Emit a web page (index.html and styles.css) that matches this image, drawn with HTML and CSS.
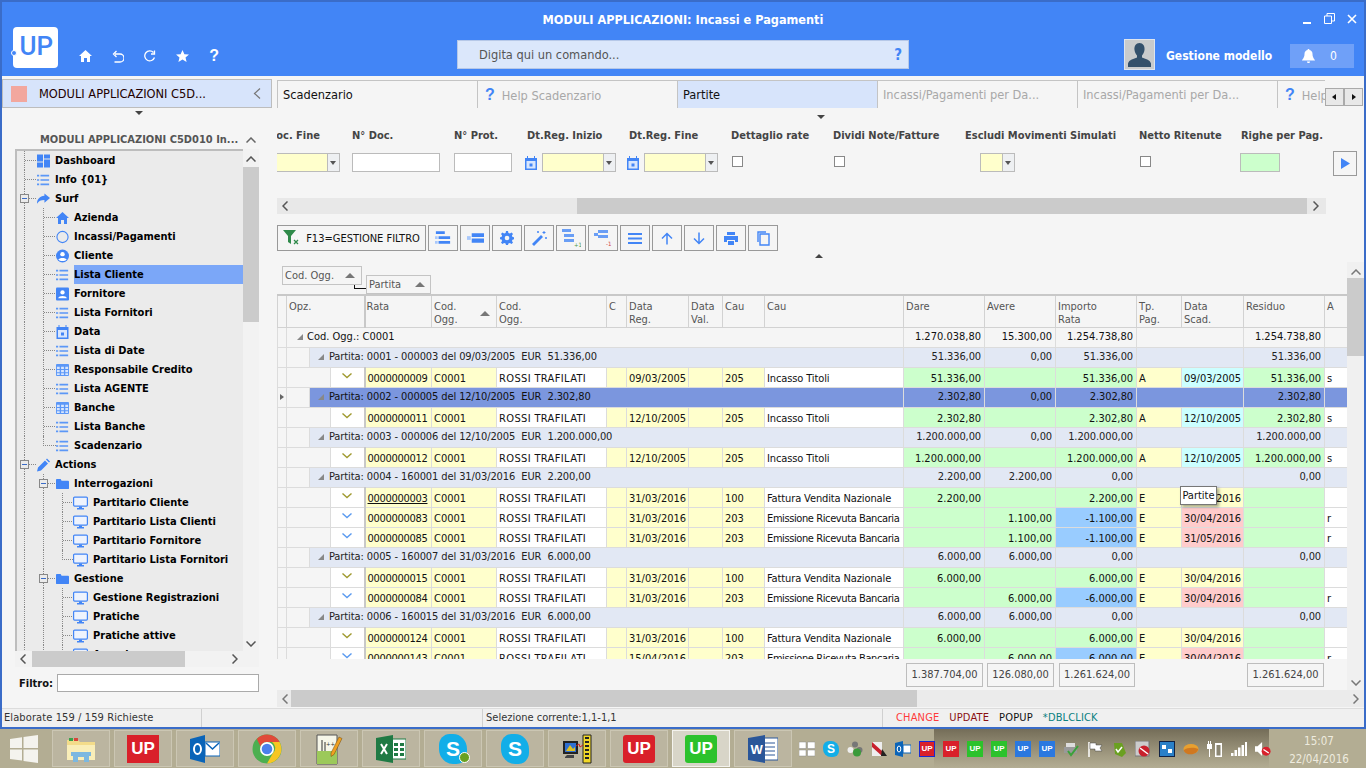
FILE: index.html
```html
<!DOCTYPE html>
<html lang="en">

<head>
    <meta charset="UTF-8" />
    <title>MODULI APPLICAZIONI: Incassi e Pagamenti</title>
    <link rel="stylesheet" href="styles.css">
</head>

<body>
    <svg class="defs" width="0" height="0">
        <symbol id="i-list" viewBox="0 -1 15 14"><path d="M0 0h2.500v2H0zM4 0h10v2H4zM0 5h2.500v2H0zM4 5h10v2H4zM0 10h2.500v2H0zM4 10h10v2H4z" fill="#5b97f7"/></symbol>
        <symbol id="i-dash" viewBox="0 0 13 13"><path d="M0 0h6v7H0zM7 0h6v4H7zM0 8h6v5H0zM7 5h6v8H7z" fill="#4285f6"/></symbol>
        <symbol id="i-share" viewBox="0 0 14 12"><path d="M8 0l6 5-6 5V7C4 7 2 8 0 11c0-5 3-8 8-8.500z" fill="#4285f6"/></symbol>
        <symbol id="i-home" viewBox="0 0 13 12"><path d="M6.500 0L13 6h-2v6H8V8H5v4H2V6H0z" fill="#4285f6"/></symbol>
        <symbol id="i-circle" viewBox="0 0 14 14"><circle cx="7" cy="7" r="6" fill="none" stroke="#4285f6" stroke-width="1.200"/></symbol>
        <symbol id="i-user" viewBox="0 0 14 14"><circle cx="7" cy="7" r="7" fill="#4285f6"/><circle cx="7" cy="5" r="2.400" fill="#fff"/><path d="M2.500 11c1-2.500 8-2.500 9 0-2 2-7 2-9 0z" fill="#fff"/></symbol>
        <symbol id="i-contact" viewBox="0 0 12 12"><rect width="12" height="12" rx="1" fill="#4285f6"/><circle cx="6" cy="4.500" r="2" fill="#fff"/><path d="M2 10c.5-3 7.500-3 8 0z" fill="#fff"/></symbol>
        <symbol id="i-cal" viewBox="0 0 12 14"><path d="M0 2h2V0h1v2h6V0h1v2h2v12H0z" fill="#4285f6"/><path d="M1.500 5h9v7.500h-9z" fill="#d8e6fd"/><path d="M4.500 7.500h3v3h-3z" fill="#4285f6"/></symbol>
        <symbol id="i-grid" viewBox="0 0 14 13"><rect width="14" height="13" rx="1" fill="#5b97f7"/><path d="M1 3h3v2.500H1zM5.500 3h3v2.500h-3zM10 3h3v2.500h-3zM1 6.500h3V9H1zM5.500 6.500h3V9h-3zM10 6.500h3V9h-3zM1 10h3v2H1zM5.500 10h3v2h-3zM10 10h3v2h-3z" fill="#d8e6fd"/></symbol>
        <symbol id="i-pencil" viewBox="0 0 13 13"><path d="M0 13l1-4 7-7 3 3-7 7zM9 1l1-1 3 3-1 1z" fill="#4285f6"/></symbol>
        <symbol id="i-folder" viewBox="0 0 14 11"><path d="M0 1a1 1 0 0 1 1-1h4l1 2h7a1 1 0 0 1 1 1v7a1 1 0 0 1-1 1H1a1 1 0 0 1-1-1z" fill="#4285f6"/></symbol>
        <symbol id="i-screen" viewBox="0 0 15 13"><rect x=".6" y=".6" width="13.800" height="9" rx="1" fill="#eef3fd" stroke="#4285f6" stroke-width="1.200"/><path d="M6 10h3v1.500h2V13H4v-1.500h2z" fill="#4285f6"/></symbol>
        <symbol id="i-chev" viewBox="0 0 10 6"><path d="M.5 .5L5 4.500 9.500 .5" fill="none" stroke="currentColor" stroke-width="1.400"/></symbol>
        <symbol id="i-stack" viewBox="0 0 18 15"><path d="M1 0h10v3H1zM4 5.500h13v3H4zM4 11h13v3H4z" fill="#4285f6"/><path d="M0 5.500h3v3H0zM0 11h3v3H0z" fill="#a9c8fb"/></symbol>
        <symbol id="i-bars" viewBox="0 0 18 10"><path d="M0 3h4v4H0z" fill="#a9c8fb"/><path d="M5 0h13v4H5zM5 5.500h13V10H5z" fill="#4285f6"/></symbol>
    </svg>

    <div class="window">
        <header class="header">
            <div class="title-row">
                <span class="title">MODULI APPLICAZIONI: Incassi e Pagamenti</span>
                <div class="win-btns">
                    <svg width="10" height="10" viewBox="0 0 10 10"><path d="M1 8h8v2H1z" fill="#fff"/></svg>
                    <svg width="11" height="11" viewBox="0 0 11 11"><path d="M.5 3h7v7.500h-7zM3 3V.5h7.500V8H8" fill="none" stroke="#fff"/></svg>
                    <svg width="10" height="10" viewBox="0 0 10 10"><path d="M1 1l8 8M9 1L1 9" stroke="#fff" stroke-width="1.600"/></svg>
                </div>
            </div>
            <div class="tool-row">
                <div class="logo"><span class="logo-dot"></span>UP</div>
                <div class="nav-icons">
                    <svg width="13" height="12" viewBox="0 0 13 12"><path d="M6.500 0L13 6h-2v6H8V8H5v4H2V6H0z" fill="#fff"/></svg>
                    <svg width="12" height="13" viewBox="0 0 12 13"><path d="M3 4h5a3.500 3.500 0 0 1 0 8H2.500M4.500 1L1.500 4l3 3" fill="none" stroke="#fff" stroke-width="1.300"/></svg>
                    <svg width="12" height="12" viewBox="0 0 12 12"><path d="M10.500 7.500A5 5 0 1 1 9.500 2.500M10.500 .5v3.500H7" fill="none" stroke="#fff" stroke-width="1.300"/></svg>
                    <svg width="13" height="12" viewBox="0 0 13 12"><path d="M6.500 0l1.900 4.200 4.600.4-3.500 3 1.100 4.400-4.100-2.400L2.400 12l1.100-4.400L0 4.600l4.600-.4z" fill="#fff"/></svg>
                    <span class="nav-help">?</span>
                </div>
                <div class="search">
                    <span>Digita qui un comando...</span>
                    <span class="search-help">?</span>
                </div>
                <div class="avatar">
                    <svg width="29" height="29" viewBox="0 0 29 29"><rect width="29" height="29" fill="#c9cbcc"/><path d="M14.500 3c3.500 0 5.500 3 5 7-.3 2.500-1.500 4.500-2.500 5.500v2c3 1.500 8 2 9 6V27H3v-3.500c1-4 6-4.500 9-6v-2C11 14.500 9.800 12.500 9.500 10c-.5-4 1.500-7 5-7z" fill="#33506b"/></svg>
                </div>
                <span class="user-name">Gestione modello</span>
                <div class="bell">
                    <svg width="13" height="14" viewBox="0 0 13 14"><path d="M6.500 0c.7 0 1 .5 1 1 2 .5 3 2 3 4 0 4 2.500 5.500 2.500 6.500H0C0 10.500 2.500 9 2.500 5c0-2 1-3.500 3-4 0-.5.300-1 1-1zM5 12.500h3c0 1-.7 1.500-1.500 1.500S5 13.500 5 12.500z" fill="#fff"/></svg>
                    <span>0</span>
                </div>
            </div>
        </header>

        <div class="main">
            <aside class="side">
                <div class="side-head">
                    <span class="side-square"></span>
                    <span class="side-name">MODULI APPLICAZIONI C5D...</span>
                    <svg width="8" height="11" viewBox="0 0 8 11"><path d="M7 .5L1.500 5.500 7 10.500" fill="none" stroke="#777" stroke-width="1.200"/></svg>
                </div>
                <div class="tri tri-side"></div>
                <div class="side-title">
                    <span>MODULI APPLICAZIONI C5D010 In...</span>
                    <svg width="10" height="6" viewBox="0 0 10 6"><path d="M.5 5.500L5 1l4.500 4.500" fill="none" stroke="#666" stroke-width="1.500"/></svg>
                </div>
                <div class="tree-wrap">
                    <div class="tree">
                        <div class="node"><i class="tee"></i><svg class="ico"><use href="#i-dash"/></svg><span>Dashboard</span></div>
                        <div class="node"><i class="tee"></i><svg class="ico"><use href="#i-list"/></svg><span>Info {01}</span></div>
                        <div class="node"><i class="tee"><b class="exp"></b></i><svg class="ico"><use href="#i-share"/></svg><span>Surf</span></div>
                        <div class="node lv1"><i class="pass"></i><i class="tee"></i><svg class="ico"><use href="#i-home"/></svg><span>Azienda</span></div>
                        <div class="node lv1"><i class="pass"></i><i class="tee"></i><svg class="ico"><use href="#i-circle"/></svg><span>Incassi/Pagamenti</span></div>
                        <div class="node lv1"><i class="pass"></i><i class="tee"></i><svg class="ico"><use href="#i-user"/></svg><span>Cliente</span></div>
                        <div class="node lv1"><i class="pass"></i><i class="tee"></i><svg class="ico"><use href="#i-list"/></svg><span class="picked">Lista Cliente</span></div>
                        <div class="node lv1"><i class="pass"></i><i class="tee"></i><svg class="ico"><use href="#i-contact"/></svg><span>Fornitore</span></div>
                        <div class="node lv1"><i class="pass"></i><i class="tee"></i><svg class="ico"><use href="#i-list"/></svg><span>Lista Fornitori</span></div>
                        <div class="node lv1"><i class="pass"></i><i class="tee"></i><svg class="ico"><use href="#i-cal"/></svg><span>Data</span></div>
                        <div class="node lv1"><i class="pass"></i><i class="tee"></i><svg class="ico"><use href="#i-list"/></svg><span>Lista di Date</span></div>
                        <div class="node lv1"><i class="pass"></i><i class="tee"></i><svg class="ico"><use href="#i-grid"/></svg><span>Responsabile Credito</span></div>
                        <div class="node lv1"><i class="pass"></i><i class="tee"></i><svg class="ico"><use href="#i-list"/></svg><span>Lista AGENTE</span></div>
                        <div class="node lv1"><i class="pass"></i><i class="tee"></i><svg class="ico"><use href="#i-grid"/></svg><span>Banche</span></div>
                        <div class="node lv1"><i class="pass"></i><i class="tee"></i><svg class="ico"><use href="#i-list"/></svg><span>Lista Banche</span></div>
                        <div class="node lv1"><i class="pass"></i><i class="elbow"></i><svg class="ico"><use href="#i-list"/></svg><span>Scadenzario</span></div>
                        <div class="node"><i class="tee"><b class="exp"></b></i><svg class="ico"><use href="#i-pencil"/></svg><span>Actions</span></div>
                        <div class="node lv1"><i class="pass"></i><i class="tee"><b class="exp"></b></i><svg class="ico"><use href="#i-folder"/></svg><span>Interrogazioni</span></div>
                        <div class="node lv2"><i class="pass"></i><i class="pass"></i><i class="tee"></i><svg class="ico"><use href="#i-screen"/></svg><span>Partitario Cliente</span></div>
                        <div class="node lv2"><i class="pass"></i><i class="pass"></i><i class="tee"></i><svg class="ico"><use href="#i-screen"/></svg><span>Partitario Lista Clienti</span></div>
                        <div class="node lv2"><i class="pass"></i><i class="pass"></i><i class="tee"></i><svg class="ico"><use href="#i-screen"/></svg><span>Partitario Fornitore</span></div>
                        <div class="node lv2"><i class="pass"></i><i class="pass"></i><i class="elbow"></i><svg class="ico"><use href="#i-screen"/></svg><span>Partitario Lista Fornitori</span></div>
                        <div class="node lv1"><i class="pass"></i><i class="tee"><b class="exp"></b></i><svg class="ico"><use href="#i-folder"/></svg><span>Gestione</span></div>
                        <div class="node lv2"><i class="pass"></i><i class="pass"></i><i class="tee"></i><svg class="ico"><use href="#i-screen"/></svg><span>Gestione Registrazioni</span></div>
                        <div class="node lv2"><i class="pass"></i><i class="pass"></i><i class="tee"></i><svg class="ico"><use href="#i-screen"/></svg><span>Pratiche</span></div>
                        <div class="node lv2"><i class="pass"></i><i class="pass"></i><i class="tee"></i><svg class="ico"><use href="#i-screen"/></svg><span>Pratiche attive</span></div>
                        <div class="node lv2"><i class="pass"></i><i class="pass"></i><i class="tee"></i><svg class="ico"><use href="#i-screen"/></svg><span>Agenda</span></div>
                    </div>
                    <div class="vbar tree-vbar">
                        <svg width="10" height="6" viewBox="0 0 10 6"><path d="M.5 5.500L5 1l4.500 4.500" fill="none" stroke="#555" stroke-width="1.500"/></svg>
                        <div class="vbar-thumb"></div>
                        <svg class="vbar-down" width="10" height="6" viewBox="0 0 10 6"><path d="M.5 .5L5 5 9.500 .5" fill="none" stroke="#555" stroke-width="1.500"/></svg>
                    </div>
                </div>
                <div class="hbar tree-hbar">
                    <svg width="6" height="10" viewBox="0 0 6 10"><path d="M5.500 .5L1 5l4.500 4.500" fill="none" stroke="#555" stroke-width="1.500"/></svg>
                    <div class="hbar-thumb"></div>
                    <svg width="6" height="10" viewBox="0 0 6 10"><path d="M.5 .5L5 5 .5 9.500" fill="none" stroke="#555" stroke-width="1.500"/></svg>
                </div>
                <div class="filtro">
                    <label for="filtro-input">Filtro:</label>
                    <input type="text" id="filtro-input" />
                </div>
            </aside>

            <section class="content">
                <nav class="tabs">
                    <div class="tab tab-on">Scadenzario</div>
                    <div class="tab tab-off"><b class="q">?</b>Help Scadenzario</div>
                    <div class="tab tab-sel">Partite</div>
                    <div class="tab tab-off">Incassi/Pagamenti per Da...</div>
                    <div class="tab tab-off">Incassi/Pagamenti per Da...</div>
                    <div class="tab tab-off tab-last"><b class="q">?</b>Help</div>
                    <div class="tab-arrows"><span class="arr-l"></span><span class="arr-r"></span></div>
                </nav>
                <div class="tri tri-top"></div>

                <div class="filters">
                    <div class="fcol f1"><label>Doc. Fine</label><div class="combo c1"><span></span><em></em></div></div>
                    <div class="fcol f2"><label>N° Doc.</label><input class="inp i1" type="text" /></div>
                    <div class="fcol f3"><label>N° Prot.</label><input class="inp i2" type="text" /></div>
                    <div class="fcol f4"><label>Dt.Reg. Inizio</label><div class="cal-field"><svg width="12" height="14"><use href="#i-cal"/></svg><div class="combo c2"><span></span><em></em></div></div></div>
                    <div class="fcol f5"><label>Dt.Reg. Fine</label><div class="cal-field"><svg width="12" height="14"><use href="#i-cal"/></svg><div class="combo c2"><span></span><em></em></div></div></div>
                    <div class="fcol f6"><label>Dettaglio rate</label><span class="chk"></span></div>
                    <div class="fcol f7"><label>Dividi Note/Fatture</label><span class="chk"></span></div>
                    <div class="fcol f8"><label>Escludi Movimenti Simulati</label><div class="combo c3"><span></span><em></em></div></div>
                    <div class="fcol f9"><label>Netto Ritenute</label><span class="chk"></span></div>
                    <div class="fcol f10"><label>Righe per Pag.</label><div class="righe"></div></div>
                    <button class="run"><svg width="9" height="11" viewBox="0 0 9 11"><path d="M0 0l9 5.500L0 11z" fill="#4285f6"/></svg></button>
                </div>

                <div class="hbar filter-hbar">
                    <svg width="6" height="10" viewBox="0 0 6 10"><path d="M5.500 .5L1 5l4.500 4.500" fill="none" stroke="#555" stroke-width="1.500"/></svg>
                    <div class="hbar-thumb"></div>
                    <svg width="6" height="10" viewBox="0 0 6 10"><path d="M.5 .5L5 5 .5 9.500" fill="none" stroke="#555" stroke-width="1.500"/></svg>
                </div>

                <div class="toolbar">
                    <button class="btn btn-filter">
                        <svg width="17" height="16" viewBox="0 0 17 16"><path d="M0 0h13L8 6v8L5 12V6z" fill="#2f8a4a"/><path d="M11 10l4 4M15 10l-4 4" stroke="#2f8a4a" stroke-width="1.300"/></svg>
                        F13=GESTIONE FILTRO
                    </button>
                    <button class="btn"><svg width="16" height="14"><use href="#i-stack"/></svg></button>
                    <button class="btn"><svg width="17" height="10"><use href="#i-bars"/></svg></button>
                    <button class="btn"><svg width="14" height="14" viewBox="0 0 14 14"><path d="M6 0h2l.4 2 1.500.6L11.600 1.500 13 3l-1.100 1.600.6 1.400 1.500.3v2l-1.500.4-.6 1.400L13 11.600 11.600 13l-1.700-1.100-1.500.6L8 14H6l-.4-1.500-1.500-.6L2.400 13 1 11.600l1.100-1.500-.6-1.500L0 8.300v-2l1.500-.3.6-1.400L1 3l1.400-1.500L4.100 2.600 5.600 2z" fill="#4285f6"/><circle cx="7" cy="7" r="2.300" fill="#f5f5f5"/></svg></button>
                    <button class="btn"><svg width="15" height="15" viewBox="0 0 15 15"><path d="M0 13L9 4l2 2-9 9z" fill="#4285f6"/><path d="M12 0v3M10.500 1.500h3M14 6v2M13 7h2M6 0v2M5 1h2" stroke="#4285f6"/></svg></button>
                    <button class="btn"><svg class="ico-sm" width="20" height="18" viewBox="0 0 20 18"><path d="M1 0h9v3H1zM3 5h10v3H3zM3 10h10v3H3z" fill="#6a9ef5"/><text x="13" y="18" class="mini mini-g">+1</text></svg></button>
                    <button class="btn"><svg class="ico-sm" width="20" height="18" viewBox="0 0 20 18"><path d="M1 4h4v3H1zM5 1h10v3H5zM5 6h10v3H5z" fill="#6a9ef5"/><text x="13" y="17" class="mini mini-r">-1</text></svg></button>
                    <button class="btn"><svg width="14" height="11" viewBox="0 0 14 11"><path d="M0 0h14v2H0zM0 4.500h14v2H0zM0 9h14v2H0z" fill="#4285f6"/></svg></button>
                    <button class="btn"><svg width="12" height="13" viewBox="0 0 12 13"><path d="M6 12.500V1.500M1 6.500l5-5 5 5" fill="none" stroke="#4285f6" stroke-width="1.500"/></svg></button>
                    <button class="btn"><svg width="12" height="13" viewBox="0 0 12 13"><path d="M6 .5v11M1 6.500l5 5 5-5" fill="none" stroke="#4285f6" stroke-width="1.500"/></svg></button>
                    <button class="btn"><svg width="14" height="13" viewBox="0 0 14 13"><path d="M3 0h8v3H3zM0 4h14v6h-3V8H3v2H0zM4 9h6v4H4z" fill="#4285f6"/></svg></button>
                    <button class="btn"><svg width="13" height="15" viewBox="0 0 13 15"><path d="M3 3h9v11H3zM1 11V1h8" fill="none" stroke="#4285f6" stroke-width="1.400"/></svg></button>
                </div>

                <div class="grid-area">
                    <div class="grid-col">
                        <div class="band">
                            <div class="tri tri-band"></div>
                            <div class="chips">
                                <div class="chip chip-a">Cod. Ogg.<em></em></div>
                                <span class="chip-link"></span>
                                <div class="chip chip-b">Partita<em></em></div>
                            </div>
                        </div>
                        <div class="grid">
                            <table class="tbl">
                                <colgroup>
                                    <col class="w9"><col class="w23"><col class="w21"><col class="w34"><col class="w67"><col class="w65"><col class="w110"><col class="w20"><col class="w62"><col class="w34"><col class="w42"><col class="w139"><col class="w81"><col class="w71"><col class="w81"><col class="w45"><col class="w62"><col class="w81"><col class="w23">
                                </colgroup>
                                <thead>
                                    <tr>
                                        <th></th><th colspan="3">Opz.</th><th class="thick">Rata</th><th class="sorted">Cod.<br>Ogg.<em></em></th><th>Cod.<br>Ogg.</th><th>C</th><th>Data<br>Reg.</th><th>Data<br>Val.</th><th>Cau</th><th>Cau</th><th>Dare</th><th>Avere</th><th>Importo<br>Rata</th><th>Tp.<br>Pag.</th><th>Data<br>Scad.</th><th>Residuo</th><th>A</th>
                                    </tr>
                                </thead>
                                <tbody>
                                    <tr class="top"><td></td><td colspan="11"><b class="node-tri"></b>Cod. Ogg.: C0001</td><td class="n">1.270.038,80</td><td class="n">15.300,00</td><td class="n">1.254.738,80</td><td colspan="2"></td><td class="n">1.254.738,80</td><td></td></tr>

                                    <tr class="grp"><td class="ind"></td><td class="gut"></td><td colspan="10"><b class="node-tri"></b>Partita: 0001 - 000003 del 09/03/2005&nbsp; EUR&nbsp; 51.336,00</td><td class="n">51.336,00</td><td class="n">0,00</td><td class="n">51.336,00</td><td colspan="2"></td><td class="n">51.336,00</td><td></td></tr>
                                    <tr><td class="ind"></td><td class="gut" colspan="2"></td><td class="opz olive"><svg width="10" height="6"><use href="#i-chev"/></svg></td><td class="y">0000000009</td><td class="y">C0001</td><td>ROSSI TRAFILATI</td><td class="y"></td><td class="y">09/03/2005</td><td class="y"></td><td class="y">205</td><td>Incasso Titoli</td><td class="g n">51.336,00</td><td class="g"></td><td class="g n">51.336,00</td><td class="y">A</td><td class="c">09/03/2005</td><td class="g n">51.336,00</td><td>s</td></tr>

                                    <tr class="grp sel"><td class="ind"><b class="row-arrow"></b></td><td class="gut"></td><td colspan="10"><b class="node-tri"></b>Partita: 0002 - 000005 del 12/10/2005&nbsp; EUR&nbsp; 2.302,80</td><td class="n">2.302,80</td><td class="n">0,00</td><td class="n">2.302,80</td><td colspan="2"></td><td class="n">2.302,80</td><td></td></tr>
                                    <tr><td class="ind"></td><td class="gut" colspan="2"></td><td class="opz olive"><svg width="10" height="6"><use href="#i-chev"/></svg></td><td class="y">0000000011</td><td class="y">C0001</td><td>ROSSI TRAFILATI</td><td class="y"></td><td class="y">12/10/2005</td><td class="y"></td><td class="y">205</td><td>Incasso Titoli</td><td class="g n">2.302,80</td><td class="g"></td><td class="g n">2.302,80</td><td class="y">A</td><td class="c">12/10/2005</td><td class="g n">2.302,80</td><td>s</td></tr>

                                    <tr class="grp"><td class="ind"></td><td class="gut"></td><td colspan="10"><b class="node-tri"></b>Partita: 0003 - 000006 del 12/10/2005&nbsp; EUR&nbsp; 1.200.000,00</td><td class="n">1.200.000,00</td><td class="n">0,00</td><td class="n">1.200.000,00</td><td colspan="2"></td><td class="n">1.200.000,00</td><td></td></tr>
                                    <tr><td class="ind"></td><td class="gut" colspan="2"></td><td class="opz olive"><svg width="10" height="6"><use href="#i-chev"/></svg></td><td class="y">0000000012</td><td class="y">C0001</td><td>ROSSI TRAFILATI</td><td class="y"></td><td class="y">12/10/2005</td><td class="y"></td><td class="y">205</td><td>Incasso Titoli</td><td class="g n">1.200.000,00</td><td class="g"></td><td class="g n">1.200.000,00</td><td class="y">A</td><td class="c">12/10/2005</td><td class="g n">1.200.000,00</td><td>s</td></tr>

                                    <tr class="grp"><td class="ind"></td><td class="gut"></td><td colspan="10"><b class="node-tri"></b>Partita: 0004 - 160001 del 31/03/2016&nbsp; EUR&nbsp; 2.200,00</td><td class="n">2.200,00</td><td class="n">2.200,00</td><td class="n">0,00</td><td colspan="2"></td><td class="n">0,00</td><td></td></tr>
                                    <tr><td class="ind"></td><td class="gut" colspan="2"></td><td class="opz olive"><svg width="10" height="6"><use href="#i-chev"/></svg></td><td class="y"><u>0000000003</u></td><td class="y">C0001</td><td>ROSSI TRAFILATI</td><td class="y"></td><td class="y">31/03/2016</td><td class="y"></td><td class="y">100</td><td>Fattura Vendita Nazionale</td><td class="g n">2.200,00</td><td class="g"></td><td class="g n">2.200,00</td><td class="y">E</td><td class="y">30/04/2016</td><td class="g"></td><td></td></tr>
                                    <tr><td class="ind"></td><td class="gut" colspan="2"></td><td class="opz blu"><svg width="10" height="6"><use href="#i-chev"/></svg></td><td class="y">0000000083</td><td class="y">C0001</td><td>ROSSI TRAFILATI</td><td class="y"></td><td class="y">31/03/2016</td><td class="y"></td><td class="y">203</td><td class="em">Emissione Ricevuta Bancaria</td><td class="g"></td><td class="g n">1.100,00</td><td class="b n">-1.100,00</td><td class="y">E</td><td class="p">30/04/2016</td><td class="g"></td><td>r</td></tr>
                                    <tr><td class="ind"></td><td class="gut" colspan="2"></td><td class="opz blu"><svg width="10" height="6"><use href="#i-chev"/></svg></td><td class="y">0000000085</td><td class="y">C0001</td><td>ROSSI TRAFILATI</td><td class="y"></td><td class="y">31/03/2016</td><td class="y"></td><td class="y">203</td><td class="em">Emissione Ricevuta Bancaria</td><td class="g"></td><td class="g n">1.100,00</td><td class="b n">-1.100,00</td><td class="y">E</td><td class="p">31/05/2016</td><td class="g"></td><td>r</td></tr>

                                    <tr class="grp"><td class="ind"></td><td class="gut"></td><td colspan="10"><b class="node-tri"></b>Partita: 0005 - 160007 del 31/03/2016&nbsp; EUR&nbsp; 6.000,00</td><td class="n">6.000,00</td><td class="n">6.000,00</td><td class="n">0,00</td><td colspan="2"></td><td class="n">0,00</td><td></td></tr>
                                    <tr><td class="ind"></td><td class="gut" colspan="2"></td><td class="opz olive"><svg width="10" height="6"><use href="#i-chev"/></svg></td><td class="y">0000000015</td><td class="y">C0001</td><td>ROSSI TRAFILATI</td><td class="y"></td><td class="y">31/03/2016</td><td class="y"></td><td class="y">100</td><td>Fattura Vendita Nazionale</td><td class="g n">6.000,00</td><td class="g"></td><td class="g n">6.000,00</td><td class="y">E</td><td class="y">30/04/2016</td><td class="g"></td><td></td></tr>
                                    <tr><td class="ind"></td><td class="gut" colspan="2"></td><td class="opz blu"><svg width="10" height="6"><use href="#i-chev"/></svg></td><td class="y">0000000084</td><td class="y">C0001</td><td>ROSSI TRAFILATI</td><td class="y"></td><td class="y">31/03/2016</td><td class="y"></td><td class="y">203</td><td class="em">Emissione Ricevuta Bancaria</td><td class="g"></td><td class="g n">6.000,00</td><td class="b n">-6.000,00</td><td class="y">E</td><td class="p">30/04/2016</td><td class="g"></td><td>r</td></tr>

                                    <tr class="grp"><td class="ind"></td><td class="gut"></td><td colspan="10"><b class="node-tri"></b>Partita: 0006 - 160015 del 31/03/2016&nbsp; EUR&nbsp; 6.000,00</td><td class="n">6.000,00</td><td class="n">6.000,00</td><td class="n">0,00</td><td colspan="2"></td><td class="n">0,00</td><td></td></tr>
                                    <tr><td class="ind"></td><td class="gut" colspan="2"></td><td class="opz olive"><svg width="10" height="6"><use href="#i-chev"/></svg></td><td class="y">0000000124</td><td class="y">C0001</td><td>ROSSI TRAFILATI</td><td class="y"></td><td class="y">31/03/2016</td><td class="y"></td><td class="y">100</td><td>Fattura Vendita Nazionale</td><td class="g n">6.000,00</td><td class="g"></td><td class="g n">6.000,00</td><td class="y">E</td><td class="y">30/04/2016</td><td class="g"></td><td></td></tr>
                                    <tr><td class="ind"></td><td class="gut" colspan="2"></td><td class="opz blu"><svg width="10" height="6"><use href="#i-chev"/></svg></td><td class="y">0000000143</td><td class="y">C0001</td><td>ROSSI TRAFILATI</td><td class="y"></td><td class="y">15/04/2016</td><td class="y"></td><td class="y">203</td><td class="em">Emissione Ricevuta Bancaria</td><td class="g"></td><td class="g n">6.000,00</td><td class="b n">-6.000,00</td><td class="y">E</td><td class="p">30/04/2016</td><td class="g"></td><td>r</td></tr>
                                </tbody>
                            </table>
                            <div class="tooltip">Partite</div>
                        </div>
                        <div class="totals">
                            <span class="tot t1">1.387.704,00</span>
                            <span class="tot t2">126.080,00</span>
                            <span class="tot t3">1.261.624,00</span>
                            <span class="tot t4">1.261.624,00</span>
                        </div>
                    </div>
                    <div class="vbar grid-vbar">
                        <svg width="10" height="6" viewBox="0 0 10 6"><path d="M.5 5.500L5 1l4.500 4.500" fill="none" stroke="#777" stroke-width="1.500"/></svg>
                        <div class="vbar-thumb"></div>
                        <svg class="vbar-down" width="10" height="6" viewBox="0 0 10 6"><path d="M.5 .5L5 5 9.500 .5" fill="none" stroke="#777" stroke-width="1.500"/></svg>
                    </div>
                </div>

                <div class="hbar grid-hbar">
                    <svg width="6" height="10" viewBox="0 0 6 10"><path d="M5.500 .5L1 5l4.500 4.500" fill="none" stroke="#777" stroke-width="1.500"/></svg>
                    <div class="hbar-thumb"></div>
                    <svg width="6" height="10" viewBox="0 0 6 10"><path d="M.5 .5L5 5 .5 9.500" fill="none" stroke="#777" stroke-width="1.500"/></svg>
                </div>
            </section>
        </div>

        <footer class="status">
            <div class="st st1">Elaborate 159 / 159 Richieste</div>
            <div class="st st2"></div>
            <div class="st st3">Selezione corrente:1,1-1,1</div>
            <div class="st st4">
                <span class="k-change">CHANGE</span>
                <span class="k-update">UPDATE</span>
                <span class="k-popup">POPUP</span>
                <span class="k-dbl">*DBLCLICK</span>
            </div>
        </footer>
    </div>

    <div class="taskbar">
        <svg class="start" width="28" height="28" viewBox="0 0 28 28"><path d="M0 4l12-1.700V13H0zM13.500 2L28 0v13H13.500zM0 14.500h12v11L0 24zM13.500 14.500H28V28l-14.500-2z" fill="#f4f3ee"/></svg>
        <div class="task-apps">
            <div class="app"><svg width="30" height="30" viewBox="0 0 30 30"><path d="M1 6h11l2 2h15v18H1z" fill="#f3dc8a"/><path d="M1 11h28v15H1z" fill="#f9eeb8"/><path d="M3 4h4v3H3z" fill="#3aa24a"/><path d="M8 4h4v3H8z" fill="#d8453a"/><path d="M5 18h20v4h-2v6h-5v-5h-6v5H7v-6H5z" fill="#7cb8e0"/></svg></div>
            <div class="app"><span class="up up-red">UP</span></div>
            <div class="app"><svg width="30" height="30" viewBox="0 0 30 30"><path d="M0 5L15 1v28L0 25z" fill="#0a64b8"/><path d="M15 8h15v14H15z" fill="#fff"/><path d="M16 9l6.500 6L29 9" fill="none" stroke="#0a64b8" stroke-width="1.500"/><rect x="15" y="8" width="15" height="14" fill="none" stroke="#0a64b8"/><ellipse cx="7.500" cy="15" rx="3.500" ry="5" fill="none" stroke="#fff" stroke-width="2"/></svg></div>
            <div class="app"><svg width="30" height="30" viewBox="0 0 30 30"><circle cx="15" cy="15" r="14.500" fill="#4caf50"/><path d="M15 .5A14.500 14.500 0 0 1 27.600 8H15a7 7 0 0 0-6.500 4.500L4.800 5A14.500 14.500 0 0 1 15 .5z" fill="#e04a3a"/><path d="M27.600 8A14.500 14.500 0 0 1 15 29.500L21 19a7 7 0 0 0-1-11z" fill="#f7c623"/><circle cx="15" cy="15" r="7" fill="#fff"/><circle cx="15" cy="15" r="5.300" fill="#4a80ec"/></svg></div>
            <div class="app"><svg width="30" height="32" viewBox="0 0 30 32"><path d="M3 2h20v29H3z" fill="#f6f6e8" stroke="#555"/><path d="M3 18h20v13H3z" fill="#9cc95a"/><path d="M8 7v11M11 9v9" stroke="#333"/><text x="12" y="13" class="mini">++</text><path d="M17 20l8-16 3 1.500-8 16-3 2z" fill="#f0a020" stroke="#6b4a10" stroke-width=".5"/></svg></div>
            <div class="app"><svg width="30" height="30" viewBox="0 0 30 30"><path d="M15 5h15v20H15z" fill="#fff" stroke="#1f7a44"/><path d="M18 9h4v3h-4zM24 9h4v3h-4zM18 14h4v3h-4zM24 14h4v3h-4zM18 19h4v3h-4zM24 19h4v3h-4z" fill="#1f7a44"/><path d="M0 4L17 1v28L0 26z" fill="#1f7a44"/><path d="M5 10l6 10M11 10L5 20" stroke="#fff" stroke-width="2"/></svg></div>
            <div class="app"><span class="skype">S</span><b class="skype-ok"></b></div>
            <div class="app"><span class="skype">S</span></div>
            <div class="app"><svg width="30" height="30" viewBox="0 0 30 30"><path d="M1 7h15v13H1z" fill="#222"/><path d="M3 9h11v9H3z" fill="#2f6fd0"/><path d="M4 17l4-6 3 4 2-2v4z" fill="#e0c020"/><path d="M5 21h7v3H3v-1z" fill="#444"/><path d="M21 1h8v28h-8z" fill="#f2d828" stroke="#222"/><path d="M23 4h4M23 8h4M23 12h4M23 16h4M23 20h4M23 24h4" stroke="#222" stroke-width="2"/><path d="M14 12l3-2 1 3 3-2" fill="none" stroke="#d02020"/></svg></div>
            <div class="app"><span class="up up-red round">UP</span></div>
            <div class="app app-on"><span class="up up-green round">UP</span></div>
            <div class="app"><svg width="30" height="30" viewBox="0 0 30 30"><path d="M14 4h16v22H14z" fill="#fff" stroke="#2a5699"/><path d="M17 9h10M17 13h10M17 17h10M17 21h10" stroke="#2a5699"/><path d="M0 4L17 1v28L0 26z" fill="#2a5699"/><text x="2.500" y="20" class="word-w">W</text></svg></div>
        </div>
        <div class="tray">
            <svg width="16" height="16" viewBox="0 0 16 16"><path d="M0 1h7v6.500H0zM8.500 1H16v6.500H8.500zM0 9h7v6H0zM8.500 9H16v6H8.500z" fill="#fff" stroke="#888" stroke-width=".5"/></svg>
            <span class="skype tiny">S</span>
            <svg width="16" height="16" viewBox="0 0 16 16"><circle cx="8" cy="3.500" r="3" fill="#777"/><circle cx="3.500" cy="9" r="3" fill="#eee"/><circle cx="12.500" cy="9" r="3" fill="#777"/><circle cx="10" cy="11.500" r="4" fill="#3a9a3a"/></svg>
            <svg width="16" height="16" viewBox="0 0 16 16"><path d="M1 1h10v14H1z" fill="#eee"/><path d="M1 1l10 9v5L1 6z" fill="#c8202c"/><path d="M11 8l5 7h-6z" fill="#222"/></svg>
            <svg width="16" height="16" viewBox="0 0 16 16"><path d="M0 2l8-2v16l-8-2z" fill="#0a64b8"/><path d="M8 4h8v8H8z" fill="#fff" stroke="#0a64b8"/><ellipse cx="4" cy="8" rx="1.800" ry="3" fill="none" stroke="#fff"/></svg>
            <span class="up up-red tiny-up edge">UP</span>
            <span class="up up-red tiny-up">UP</span>
            <span class="up up-green tiny-up">UP</span>
            <span class="up up-green tiny-up">UP</span>
            <span class="up up-blue tiny-up">UP</span>
            <span class="up up-blue tiny-up">UP</span>
            <svg width="16" height="16" viewBox="0 0 16 16"><path d="M1 6h13v6H1z" fill="#999"/><path d="M3 2h9v4H3z" fill="#ddd"/><path d="M5 10l3 4 7-9" fill="none" stroke="#3aa23a" stroke-width="2"/></svg>
            <svg width="16" height="16" viewBox="0 0 16 16"><path d="M2 1v15" stroke="#fff" stroke-width="1.500"/><path d="M3 2h6v2h6l-2 3 2 3H8V8H3z" fill="#fff" stroke="#444" stroke-width=".5"/></svg>
            <svg width="16" height="16" viewBox="0 0 16 16"><path d="M3 2l8 0 4 10-4 4-7-3z" fill="#6aa020"/><path d="M5 8l2 3 4-5" fill="none" stroke="#fff" stroke-width="1.500"/></svg>
            <svg width="16" height="16" viewBox="0 0 16 16"><rect x="0" y="0" width="14" height="15" fill="#ccc" stroke="#777"/><circle cx="9" cy="10" r="5.500" fill="#c8202c"/><path d="M5 7l8 6" stroke="#fff" stroke-width="1.500"/></svg>
            <svg width="16" height="16" viewBox="0 0 16 16"><rect x=".5" y=".5" width="15" height="15" fill="#2a80c8" stroke="#124"/><path d="M3 4h4v4H3zM9 8h4v4H9z" fill="#fff"/></svg>
            <svg width="16" height="12" viewBox="0 0 18 12"><ellipse cx="9" cy="6" rx="8.500" ry="5.500" fill="#e8a030"/><path d="M1 7c4-3 12-3 16-1 0 3-4 6-8 6S1 10 1 7z" fill="#d07820"/></svg>
            <svg width="16" height="16" viewBox="0 0 16 16"><path d="M1 0h1v3h1V0h1v3h1v5H3v8H2V8H0V3h1zM8 2h7v14H8z" fill="#fff"/><path d="M9.500 4h4v10.500h-4z" fill="#8b8672"/></svg>
            <svg width="16" height="14" viewBox="0 0 16 14"><path d="M0 11h2.500v3H0zM3.500 8H6v6H3.500zM7 5.500h2.500V14H7zM10.500 3H13v11h-2.500zM14 0h2v14h-2z" fill="#fff"/></svg>
            <svg width="16" height="16" viewBox="0 0 18 16"><path d="M0 5h3l5-5v16l-5-5H0z" fill="#fff"/><circle cx="12.500" cy="10.500" r="5" fill="#d8202c"/><path d="M9.500 8.500l6 4" stroke="#fff" stroke-width="1.500"/></svg>
        </div>
        <div class="clock"><div>15:07</div><div>22/04/2016</div></div>
    </div>
</body>

</html>
```
FILE: styles.css
```css
* {
    box-sizing: border-box;
}

html,
body {
    margin: 0;
    padding: 0;
    height: 768px;
    overflow: hidden;
}

body {
    font-family: "DejaVu Sans Condensed", "DejaVu Sans", sans-serif;
    font-stretch: condensed;
    font-size: 11px;
    color: #111;
    background-color: #b3ad93;
}

.defs {
    display: block;
    height: 0;
}

.window {
    height: 729px;
    display: flex;
    flex-direction: column;
    background-color: #f5f5f5;
    border: 2px solid #3a6cc8;
}

/* header */
.header {
    height: 74px;
    flex: none;
    background-color: #4285f6;
    color: white;
}

.title-row {
    height: 34px;
    display: flex;
    align-items: center;
    justify-content: center;
    position: relative;
}

.title {
    font-size: 12.600px;
    font-weight: bold;
}

.win-btns {
    position: absolute;
    right: 7px;
    top: 11px;
    display: flex;
    gap: 12px;
    align-items: center;
}

.tool-row {
    height: 40px;
    display: flex;
    align-items: center;
    padding: 0 0 3px 11px;
}

.logo {
    width: 45px;
    height: 41px;
    margin-top: -14px;
    background-color: white;
    border-radius: 4px;
    color: #4285f6;
    font-family: Roboto, sans-serif;
    font-stretch: normal;
    font-weight: 500;
    font-size: 26px;
    line-height: 39px;
    text-align: right;
    padding-right: 5px;
    position: relative;
}

.logo-dot {
    position: absolute;
    left: -2px;
    top: 23px;
    width: 6px;
    height: 6px;
    border-radius: 50%;
    background-color: #4285f6;
    border: 1px solid white;
}

.nav-icons {
    width: 140px;
    margin: 3px 0 0 21px;
    display: flex;
    align-items: center;
    justify-content: space-between;
}

.nav-help {
    font-family: "Liberation Sans", sans-serif;
    font-size: 16px;
    font-weight: bold;
}

.search {
    width: 452px;
    height: 29px;
    margin-left: 238px;
    background-color: #dbe7fb;
    border: 1px solid #b6c8e8;
    color: #555;
    font-size: 12.700px;
    display: flex;
    align-items: center;
    justify-content: space-between;
    padding: 0 6px 0 21px;
}

.search-help {
    color: #4285f6;
    font-size: 15px;
    font-weight: bold;
}

.avatar {
    width: 31px;
    height: 31px;
    margin-left: 215px;
    border: 1px solid #dfe5ee;
}

.avatar svg {
    display: block;
}

.user-name {
    margin: 3px 0 0 11px;
    width: 124px;
    font-size: 12px;
    font-weight: bold;
}

.bell {
    width: 64px;
    height: 24px;
    margin-top: 3px;
    background-color: #6fa0f8;
    display: flex;
    align-items: center;
    gap: 15px;
    padding-left: 12px;
    font-size: 12px;
}

/* left panel */
.main {
    flex: 1;
    display: flex;
    min-height: 0;
}

.side {
    width: 273px;
    flex: none;
    padding-top: 3px;
}

.side-head {
    width: 270px;
    height: 29px;
    background-color: #d7e4fb;
    border: 1px solid #bdbdbd;
    display: flex;
    align-items: center;
    font-size: 12.700px;
    padding-left: 8px;
}

.side-square {
    width: 16px;
    height: 16px;
    background-color: #f2a79e;
}

.side-name {
    margin-left: 12px;
    width: 214px;
    color: #200;
}

.tri {
    width: 0;
    height: 0;
    border-left: 4px solid transparent;
    border-right: 4px solid transparent;
    border-top: 4px solid #444;
}

.tri-side {
    margin: 3px 0 0 133px;
}

.side-title {
    display: flex;
    align-items: center;
    justify-content: space-between;
    margin: 15px 0 0 38px;
    width: 216px;
    height: 19px;
    color: #555;
    font-weight: bold;
}

.tree-wrap {
    display: flex;
    margin-left: 13px;
    height: 502px;
    width: 244px;
}

.tree {
    width: 228px;
    background-color: #ebebeb;
    border-left: 2px solid #bdbdbd;
    border-top: 2px solid #bdbdbd;
    padding-left: 7px;
    overflow: hidden;
    font-weight: bold;
    color: #000;
}

.node {
    height: 19px;
    display: flex;
    align-items: center;
    white-space: nowrap;
}

.node i {
    display: block;
    flex: none;
    align-self: stretch;
    position: relative;
}

.pass {
    width: 19px;
    border-left: 1px dotted #888;
}

.tee {
    width: 13px;
    border-left: 1px dotted #888;
}

.tee::after {
    content: "";
    position: absolute;
    top: 9px;
    left: 0;
    right: 1px;
    border-top: 1px dotted #888;
}

.node i.elbow {
    width: 13px;
    height: 10px;
    align-self: flex-start;
    border-left: 1px dotted #888;
    border-bottom: 1px dotted #888;
}

.node .ico {
    width: 13px;
    height: 14px;
    flex: none;
    margin-right: 5px;
}

.lv2 i:nth-child(3) {
    width: 11px;
}

.lv2 .ico {
    width: 15px;
    margin-right: 5px;
}

.exp {
    position: absolute;
    left: -5px;
    top: 5px;
    width: 9px;
    height: 9px;
    background-color: #ebebeb;
    border: 1px solid #888;
    z-index: 1;
}

.exp::after {
    content: "";
    position: absolute;
    left: 1px;
    top: 3px;
    width: 5px;
    height: 1px;
    background-color: #3a6cc8;
}

.picked {
    flex: 1;
    background-color: #7ba7f8;
    line-height: 19px;
}

/* scrollbars */
.vbar {
    width: 16px;
    display: flex;
    flex-direction: column;
    align-items: center;
    background-color: #f2f2f2;
    padding-top: 7px;
}

.vbar-down {
    margin-top: auto;
    margin-bottom: 4px;
}

.vbar-thumb {
    width: 100%;
    background-color: #cbcbcb;
    margin-top: 5px;
    height: 155px;
}

.hbar {
    display: flex;
    align-items: center;
    background-color: #ebebeb;
    height: 16px;
    padding: 0 5px;
}

.hbar-thumb {
    background-color: #cbcbcb;
    align-self: stretch;
}

.tree-hbar {
    margin-left: 13px;
    width: 244px;
    padding: 0 21px 0 5px;
    background-color: #f2f2f2;
}

.tree-hbar .hbar-thumb {
    width: 153px;
    margin-right: auto;
    margin-left: 6px;
}

.filtro {
    display: flex;
    align-items: center;
    margin: 7px 0 0 17px;
    font-weight: bold;
    color: #111;
}

.filtro input {
    width: 202px;
    height: 18px;
    margin-left: 4px;
    border: 1px solid #aaa;
    background-color: white;
}

/* right side */
.content {
    flex: 1;
    min-width: 0;
    padding-left: 2px;
}

.tabs {
    height: 28px;
    margin-top: 4px;
    display: flex;
    border-top: 1px solid #c4c4c4;
    font-size: 12.700px;
    position: relative;
    width: 1048px;
}

.tab {
    width: 200px;
    flex: none;
    padding-left: 5px;
    line-height: 28px;
    border-left: 1px solid #c4c4c4;
    white-space: nowrap;
}

.tab-off {
    color: #a8a8a8;
}

.tab-sel {
    background-color: #d7e4fb;
}

.tab-last {
    width: 48px;
    overflow: hidden;
}

.q {
    color: #4285f6;
    font-size: 16px;
    font-family: "Liberation Sans", sans-serif;
    margin: 0 7px 0 2px;
}

.tab-arrows {
    position: absolute;
    left: 1048px;
    top: 7px;
    display: flex;
}

.tab-arrows span {
    width: 19px;
    height: 18px;
    background-color: #e8e8e8;
    border: 1px solid #aaa;
    position: relative;
}

.tab-arrows span::after {
    content: "";
    position: absolute;
    top: 5px;
    border-top: 3px solid transparent;
    border-bottom: 3px solid transparent;
}

.arr-l::after {
    left: 6px;
    border-right: 4px solid #111;
}

.arr-r::after {
    left: 7px;
    border-left: 4px solid #111;
}

.tri-top {
    margin: 7px 0 0 540px;
}

/* filter row */
.filters {
    margin-top: 8px;
    height: 49px;
    display: flex;
    overflow: hidden;
    position: relative;
    width: 1087px;
}

.fcol {
    flex: none;
}

.fcol label {
    display: block;
    height: 18px;
    line-height: 18px;
    font-weight: bold;
    color: #444;
    white-space: nowrap;
    margin-bottom: 8px;
}

.f1 {
    width: 84px;
    margin-left: -9px;
}

.f2 {
    width: 102px;
}

.f3 {
    width: 71px;
}

.f4 {
    width: 102px;
}

.f4 label,
.f5 label {
    padding-left: 2px;
}

.f5 {
    width: 104px;
}

.f6 {
    width: 102px;
}

.f7 {
    width: 132px;
}

.f8 {
    width: 174px;
}

.f9 {
    width: 102px;
}

.f10 {
    width: 92px;
}

.combo {
    display: flex;
    height: 19px;
    border: 1px solid #bbb;
}

.combo span {
    flex: 1;
    background-color: #ffffcc;
}

.combo em {
    width: 12px;
    background-color: #eef0f2;
    border-left: 1px solid #bbb;
    position: relative;
}

.combo em::after {
    content: "";
    position: absolute;
    left: 2px;
    top: 7px;
    border-left: 3.500px solid transparent;
    border-right: 3.500px solid transparent;
    border-top: 4px solid #555;
}

.c1 {
    width: 72px;
}

.c2 {
    width: 74px;
    margin-left: 5px;
}

.c3 {
    width: 35px;
    margin-left: 15px;
}

.inp {
    display: block;
    height: 19px;
    border: 1px solid #bbb;
    background-color: white;
    padding: 0;
}

.i1 {
    width: 88px;
}

.i2 {
    width: 58px;
}

.cal-field {
    display: flex;
    align-items: center;
}

/* the label's 8px bottom margin collapses into this one */
.chk {
    display: block;
    width: 11px;
    height: 11px;
    border: 1px solid #888;
    background-color: white;
    margin: 11px 0 0 1px;
}

.righe {
    width: 40px;
    height: 19px;
    margin-left: -1px;
    background-color: #ccffcc;
    border: 1px solid #bbb;
}

.run {
    position: absolute;
    left: 1056px;
    top: 24px;
    width: 24px;
    height: 25px;
    padding: 0;
    background-color: #f5f5f5;
    border: 1px solid #999;
    display: flex;
    align-items: center;
    justify-content: center;
}

.filter-hbar {
    margin-top: 22px;
    width: 1049px;
    background-color: #e8e8e8;
    padding: 0 7px 0 5px;
}

.filter-hbar .hbar-thumb {
    width: 730px;
    margin-left: auto;
    margin-right: 6px;
}

/* toolbar */
.toolbar {
    display: flex;
    gap: 2px;
    margin-top: 11px;
    height: 26px;
}

.btn {
    width: 30px;
    height: 26px;
    padding: 0;
    background-color: #f5f5f5;
    border: 1px solid #999;
    display: flex;
    align-items: center;
    justify-content: center;
    font-family: inherit;
    font-stretch: condensed;
    font-size: 11px;
    color: #111;
}

.btn-filter {
    width: 149px;
    gap: 6px;
}

.mini {
    font-size: 6px;
    fill: #333;
}

.mini-g {
    fill: #4a9a4a;
}

.mini-r {
    fill: #d04040;
}

/* grid */
.grid-area {
    display: flex;
    height: 439px;
}

.grid-col {
    width: 1070px;
    flex: none;
}

.band {
    height: 43px;
    position: relative;
}

.tri-band {
    position: absolute;
    left: 538px;
    top: 3px;
    transform: rotate(180deg);
}

.chips {
    display: flex;
    padding: 15px 0 0 5px;
    align-items: flex-start;
    color: #555;
}

.chip {
    border: 1px solid #c4c4c4;
    height: 19px;
    line-height: 17px;
    padding-left: 2px;
    position: relative;
    background-color: #f5f5f5;
}

.chip em {
    position: absolute;
    top: 6px;
    border-left: 5px solid transparent;
    border-right: 5px solid transparent;
    border-bottom: 5px solid #777;
}

.chip-a {
    width: 80px;
    margin-right: -8px;
}

.chip-a em {
    right: 6px;
}

.chip-link {
    width: 12px;
    height: 4px;
    margin-top: 19px;
    border-left: 1px solid #111;
    border-bottom: 1px solid #111;
}

.chip-b {
    width: 65px;
    margin-top: 9px;
}

.chip-b em {
    right: 5px;
}

.grid {
    height: 365px;
    overflow: hidden;
    position: relative;
    border-top: 2px solid #c8c8c8;
}

.tbl {
    width: 1070px;
    table-layout: fixed;
    border-collapse: collapse;
}

.w9 { width: 9px; }
.w20 { width: 20px; }
.w21 { width: 21px; }
.w23 { width: 23px; }
.w34 { width: 34px; }
.w42 { width: 42px; }
.w45 { width: 45px; }
.w62 { width: 62px; }
.w65 { width: 65px; }
.w67 { width: 67px; }
.w71 { width: 71px; }
.w81 { width: 81px; }
.w110 { width: 110px; }
.w139 { width: 139px; }

.tbl th {
    height: 31px;
    padding: 4px 2px 0;
    vertical-align: top;
    text-align: left;
    font-weight: normal;
    line-height: 13px;
    color: #555;
    border: 1px solid #d2d2d2;
    border-top: none;
    white-space: nowrap;
    position: relative;
}

.tbl th.thick {
    border-left: 2px solid #c8c8c8;
    padding-left: 1px;
}

.sorted em {
    position: absolute;
    right: 6px;
    top: 15px;
    border-left: 5px solid transparent;
    border-right: 5px solid transparent;
    border-bottom: 5px solid #777;
}

.tbl td {
    height: 20px;
    padding: 3px 3px 0 2px;
    border: 1px solid #dcdcdc;
    white-space: nowrap;
    overflow: hidden;
    background-color: white;
    line-height: 15px;
    color: #111;
}

/* group rows sit a bit higher than the data rows */
.tbl .grp td,
.tbl .top td {
    padding-top: 0;
    line-height: 18px;
}

.tbl td.ind,
.tbl td.gut,
.tbl .top td {
    background-color: #f5f5f5;
}

.tbl .grp td {
    background-color: #e2e8f4;
    color: #222;
    letter-spacing: -0.1px;
}

.tbl .grp td.ind,
.tbl .grp td.gut {
    background-color: #f5f5f5;
}

.tbl .sel td:not(.ind):not(.gut) {
    background-color: #7b96de;
    border-top: 1px dotted #222;
    border-bottom: 1px dotted #222;
    color: #111;
}

.tbl tr:not(.grp):not(.top) td:nth-child(4) {
    letter-spacing: -0.3px;
}

.tbl tr:not(.grp):not(.top) td:nth-child(6) {
    letter-spacing: 0.35px;
}

.tbl tr:not(.grp):not(.top) td:nth-child(11) {
    letter-spacing: -0.12px;
}

.tbl tr:not(.grp):not(.top) td.em {
    letter-spacing: -0.4px;
}

.node-tri {
    display: inline-block;
    width: 0;
    height: 0;
    margin: 0 4px 0 8px;
    border-left: 6px solid transparent;
    border-bottom: 6px solid #888;
}

.grp .node-tri {
    margin: 0 5px 0 6px;
}

.row-arrow {
    display: block;
    width: 0;
    height: 0;
    border-top: 3px solid transparent;
    border-bottom: 3px solid transparent;
    border-left: 4px solid #666;
}

.tbl td.ind {
    padding: 0 2px;
}

.tbl tr td.opz {
    text-align: center;
    padding: 0;
    border-right: 2px solid #c8c8c8;
    line-height: 12px;
    vertical-align: top;
}

.opz svg {
    display: inline-block;
    margin-top: 5px;
}

.tbl td.olive {
    color: #a09a30;
}

.tbl td.blu {
    color: #5a9af0;
}

.tbl td.y {
    background-color: #ffffcc;
}

.tbl td.g {
    background-color: #ccffcc;
}

.tbl td.c {
    background-color: #ccffff;
}

.tbl td.b {
    background-color: #99ccff;
}

.tbl td.p {
    background-color: #ffcccc;
}

.n {
    text-align: right;
}

.tooltip {
    position: absolute;
    left: 903px;
    top: 190px;
    width: 37px;
    height: 19px;
    background-color: white;
    border: 1px solid #777;
    box-shadow: 2px 2px 3px rgba(0, 0, 0, 0.35);
    text-align: center;
    line-height: 17px;
    color: #111;
}

.totals {
    height: 31px;
    display: flex;
    align-items: center;
    padding: 1px 0 0 629px;
}

.tot {
    height: 24px;
    line-height: 22px;
    border: 1px solid #bdbdbd;
    text-align: center;
    color: #444;
}

.t1 {
    width: 77px;
    margin-right: 4px;
}

.t2 {
    width: 67px;
    margin-right: 5px;
}

.t3 {
    width: 76px;
    margin-right: 112px;
}

.t4 {
    width: 77px;
}

.grid-vbar {
    width: 17px;
    margin-top: 11px;
    background-color: #f0f0f0;
}

.grid-vbar .vbar-thumb {
    height: 78px;
    margin-top: 3px;
}

.grid-hbar {
    width: 1087px;
    height: 17px;
}

.grid-hbar svg:last-child {
    margin-left: auto;
}

.grid-hbar .hbar-thumb {
    width: 626px;
    margin-left: 3px;
}

/* status bar */
.status {
    height: 19px;
    flex: none;
    display: flex;
    background-color: #f0f0f0;
    border-top: 1px solid #dcdcdc;
    line-height: 18px;
}

.st {
    padding-left: 3px;
    border-right: 1px solid #d0d0d0;
    white-space: nowrap;
}

.st1 {
    width: 200px;
    padding-left: 2px;
    color: #333;
    letter-spacing: 0.1px;
}

.st2 {
    width: 281px;
}

.st3 {
    width: 400px;
    padding-left: 3px;
    color: #333;
}

.st4 {
    border-right: none;
    padding-left: 13px;
    display: flex;
    gap: 10px;
    letter-spacing: 0.15px;
}

.k-change {
    color: #ff3b3b;
}

.k-update {
    color: #8a1010;
}

.k-popup {
    color: #111;
}

.k-dbl {
    color: #0a8080;
}

/* taskbar */
.taskbar {
    height: 39px;
    display: flex;
    align-items: center;
    background: linear-gradient(#746d58, #a39c83 70%, #b3ad93) 934px 0 / 335px 100% no-repeat, #b3ad93;
}

.start {
    margin-left: 10px;
    flex: none;
}

.task-apps {
    display: flex;
    gap: 4px;
    margin-left: 14px;
}

.app {
    width: 58px;
    height: 37px;
    display: flex;
    align-items: center;
    justify-content: center;
    background-color: #bbb5a0;
    border: 1px solid #cbc6b3;
    position: relative;
}

.app-on {
    background-color: #d8d5c8;
    border-color: #f4f3ee;
}

.up {
    font-family: "Liberation Sans", sans-serif;
    font-stretch: normal;
    font-weight: bold;
    color: white;
    width: 32px;
    height: 28px;
    line-height: 28px;
    font-size: 17px;
    text-align: center;
    display: block;
}

.up-red {
    background-color: #d9202a;
}

.up-green {
    background-color: #2cc22c;
}

.up-blue {
    background-color: #2a78e0;
}

.round {
    border-radius: 3px;
}

.skype {
    width: 28px;
    height: 30px;
    border-radius: 38% 50% 38% 50%;
    background-color: #12aee8;
    color: white;
    font-family: "Liberation Sans", sans-serif;
    font-stretch: normal;
    font-size: 21px;
    font-weight: bold;
    line-height: 30px;
    text-align: center;
    display: block;
}

.skype-ok {
    position: absolute;
    right: 11px;
    bottom: 3px;
    width: 11px;
    height: 11px;
    border-radius: 50%;
    background-color: #6aa020;
    border: 1px solid white;
}

.word-w {
    font-family: "Liberation Sans", sans-serif;
    font-size: 13px;
    font-weight: bold;
    fill: white;
}

.tray {
    display: flex;
    align-items: center;
    gap: 8px;
    margin-left: 7px;
}

.tiny {
    width: 16px;
    height: 16px;
    flex: none;
    font-size: 12px;
    line-height: 16px;
}

.tiny-up {
    width: 16px;
    height: 16px;
    flex: none;
    font-size: 8px;
    line-height: 16px;
}

.edge {
    outline: 1px solid #1a2ad0;
    outline-offset: -1px;
}

.tray svg {
    flex: none;
}

.clock {
    width: 90px;
    margin: 0 2px 0 auto;
    padding-top: 3px;
    color: #eeebdf;
    text-align: center;
    line-height: 18px;
    font-size: 11.500px;
}
```
